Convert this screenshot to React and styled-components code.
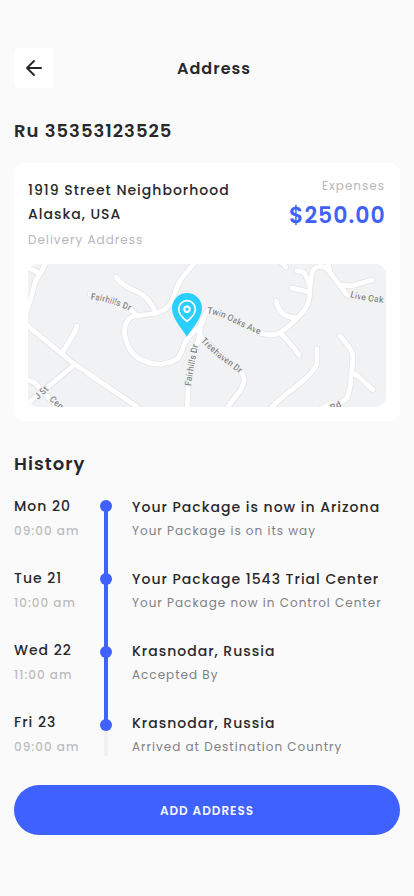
import React from 'react';
import styled, { createGlobalStyle } from 'styled-components';

const GlobalStyle = createGlobalStyle`
  * { box-sizing: border-box; }
  body {
    margin: 0;
    background: #fafafa;
    color: #29292b;
    font-family: Poppins, Inter, sans-serif;
    letter-spacing: 1px;
  }
`;

const Screen = styled.main`
  min-height: 896px;
  padding: 48px 14px 0;
  background: #fafafa;
  white-space: nowrap;
`;

const Header = styled.header`
  display: flex;
  height: 40px;
`;

const BackButton = styled.button`
  display: flex;
  align-items: center;
  justify-content: center;
  width: 40px;
  height: 40px;
  padding: 0;
  border: 0;
  border-radius: 5px;
  background: #fff;
  color: #262628;
`;

const PageTitle = styled.h1`
  flex: 1;
  margin: 0;
  padding: 1px 26px 0 0;
  text-align: center;
  font-size: 16px;
  font-weight: 600;
  line-height: 40px;
`;

const SectionTitle = styled.h2`
  margin: 31px 0 20px;
  font-size: 18px;
  font-weight: 600;
  line-height: 24px;
`;

const Card = styled.section`
  padding: 13px 14px 14px;
  border-radius: 10px;
  background: #fff;
`;

const CardTop = styled.div`
  display: flex;
  justify-content: space-between;
  margin-bottom: 14px;
`;

const AddressBlock = styled.div`
  padding-top: 2px;
`;

const AddressLine = styled.div`
  font-size: 14px;
  font-weight: 500;
  line-height: 24px;
`;

const Caption = styled.div`
  margin-top: ${(p) => p.$gap || 0}px;
  color: ${(p) => p.$color || '#b7b7bb'};
  font-size: 12px;
  font-weight: ${(p) => p.$weight || 400};
  line-height: 20px;
`;

const CostBlock = styled.div`
  display: flex;
  flex-direction: column;
  align-items: flex-end;
  padding-right: 1px;
`;

const Price = styled.div`
  margin-top: 6px;
  margin-right: -0.6px;
  color: #3f61f6;
  font-size: 22px;
  font-weight: 600;
  line-height: 28px;
`;

const MapFrame = styled.div`
  height: 143px;
  overflow: hidden;
  border-radius: 10px;
  background: #f1f2f4;

  svg { display: block; }
`;

const Timeline = styled.section`
  display: grid;
  grid-template-columns: 86px 12px 1fr;
  height: 261px;
`;

const Entries = styled.div`
  padding: ${(p) => p.$pad};
`;

const Entry = styled.div`
  height: 72px;
`;

const EntryTitle = styled.div`
  font-size: 14px;
  font-weight: 500;
  line-height: 20px;
`;

const Track = styled.div`
  display: flex;
  flex-direction: column;
  gap: 61px;
  height: 256px;
  margin-top: 4px;
  background:
    linear-gradient(#3e61ff, #3e61ff) center 6px / 4px 219px no-repeat,
    linear-gradient(#f1f1f2, #f1f1f2) center 6px / 4px 250px no-repeat;
`;

const Dot = styled.span`
  width: 12px;
  height: 12px;
  border-radius: 50%;
  background: #3e61ff;
`;

const PrimaryButton = styled.button`
  display: block;
  width: 100%;
  height: 50px;
  margin-top: 28px;
  padding: 1px 0 0;
  border: 0;
  border-radius: 25px;
  background: #3e61ff;
  color: #f4f6ff;
  font: 600 12px/49px Poppins, Inter, sans-serif;
  letter-spacing: 1px;
`;

const ROADS = [
  'M18 -2 C14 8 9 13 7 19 S4 32 -1 46',
  'M-2 2 L12 10',
  'M-2 60.5 L45 99 L112 145',
  'M49 62 Q47 69 42 76 L34 89',
  'M46 101 L15 127 L-2 141',
  'M-2 115 Q5 117 9 121 L31 145',
  'M88 13 Q93 20 103 25 Q116 30 121 37 Q125 43 128 49',
  'M62 30 L66 32',
  'M102 45 L109 52',
  'M167 -2 Q158 9 152 17 C147 26 146 36 141 41 Q136 47 129 49 Q117 51 106 52 C99 54 95 62 97 72 C99 82 104 90 110 94 C118 98 127 101 134 100 Q145 98 149 95 C155 89 154 83 158 77 C164 66 173 65 175 57 C176 52 177 49 181 46',
  'M174 56 L172 65 Q172 74 169 80 L163 110 Q159 120 160 132 L159 145',
  'M171 65 Q172 73 178 78 L211 106 Q217 111 216 118 Q213 127 207 133 L198 146',
  'M181 46 Q187 48 191 50',
  'M231 69 Q235 70 242 71 Q250 71 257 65 Q263 61 268 55 Q278 46 280 39 C283 31 281 23 283 15 Q284 4 289 3 C296 1 299 4 304 11 Q311 20 316 27 Q318 31 324 33',
  'M315 21 Q323 23 330 20 L344 16',
  'M269 7 Q277 7 278 12 L281 20',
  'M264 24 L281 28',
  'M248 37 Q251 48 257 51 Q262 54 269 54',
  'M252 69 Q262 78 271 91',
  'M289 85 L289 99 Q287 106 279 113 C268 124 256 130 242 145',
  'M312 72 Q320 81 324 88 Q326 96 323 110 Q323 124 319 134 Q315 139 309 139 Q299 140 293 145',
  'M324 109 L330 112 L345 126',
  'M253 -2 L258 3',
  'M299 -3 L302 6',
];

const LABELS = [
  { id: 'fairhills', d: 'M62.5 35.5 Q85 38 107 49.5', text: 'Fairhills Dr', length: 41 },
  { id: 'twin-oaks', d: 'M179 49 Q191 51 206 59 Q222 67 242 75', text: 'Twin Oaks Ave', length: 57 },
  { id: 'treehaven', d: 'M172.5 77 Q183 88 192 95 Q203 103 217 114', text: 'Treehaven Dr', length: 51 },
  { id: 'fairhills-south', d: 'M163 122 Q165 106 171 77', text: 'Fairhills Dr', length: 42 },
  { id: 'live-oak', d: 'M322 33 Q337 38 370 40', text: 'Live Oak', length: 34 },
  { id: 'j-st', d: 'M10 136 L27 120', text: 'J St', length: 15 },
  { id: 'center', d: 'M21 136 L48 160', text: 'Cen', length: 15 },
  { id: 'rd', d: 'M304 147 L322 138', text: 'Rd', length: 11 },
];

const HISTORY = [
  { day: 'Mon 20', time: '09:00 am', title: 'Your Package is now in Arizona', note: 'Your Package is on its way' },
  { day: 'Tue 21', time: '10:00 am', title: 'Your Package 1543 Trial Center', note: 'Your Package now in Control Center' },
  { day: 'Wed 22', time: '11:00 am', title: 'Krasnodar, Russia', note: 'Accepted By' },
  { day: 'Fri 23', time: '09:00 am', title: 'Krasnodar, Russia', note: 'Arrived at Destination Country' },
];

function BackArrow() {
  return (
    <svg width="18" height="18" viewBox="0 0 18 18" fill="none" stroke="currentColor" strokeWidth="1.9" strokeLinecap="round" strokeLinejoin="round">
      <path d="M16 9H2M9 2L2 9l7 7" />
    </svg>
  );
}

function StreetMap() {
  return (
    <svg width="358" height="143" viewBox="0 0 358 143" fill="none">
      <g stroke="#e1e2e4" strokeWidth="6.2" strokeLinecap="round" strokeLinejoin="round">
        {ROADS.map((d) => <path key={d} d={d} />)}
      </g>
      <g stroke="#fff" strokeWidth="4.8" strokeLinecap="round" strokeLinejoin="round">
        {ROADS.map((d) => <path key={d} d={d} />)}
      </g>
      <g
        fill="#858688"
        stroke="#f3f4f5"
        strokeWidth="2.6"
        paintOrder="stroke"
        fontFamily="Roboto, sans-serif"
        fontSize="9"
        fontWeight="500"
        letterSpacing="0"
      >
        {LABELS.map(({ id, d, text, length }) => (
          <React.Fragment key={id}>
            <path id={id} d={d} fill="none" stroke="none" />
            <text textLength={length} lengthAdjust="spacingAndGlyphs">
              <textPath href={`#${id}`} textLength={length} lengthAdjust="spacingAndGlyphs">{text}</textPath>
            </text>
          </React.Fragment>
        ))}
      </g>
      <path fill="#2acfff" d="M159 73 C156 67 144 55 144 44 A15 15 0 0 1 174 44 C174 55 162 67 159 73Z" />
      <g stroke="#fff" strokeWidth="1.7">
        <path d="M159 57.3 C155 54.3 150.7 50.2 150.7 45 A8.3 8.3 0 0 1 167.3 45 C167.3 50.2 163 54.3 159 57.3Z" strokeLinejoin="round" />
        <circle cx="159" cy="45.2" r="2.7" strokeWidth="2" />
      </g>
    </svg>
  );
}

export default function App() {
  return (
    <Screen>
      <GlobalStyle />
      <Header>
        <BackButton aria-label="Back"><BackArrow /></BackButton>
        <PageTitle>Address</PageTitle>
      </Header>

      <SectionTitle>Ru 35353123525</SectionTitle>

      <Card>
        <CardTop>
          <AddressBlock>
            <AddressLine>1919 Street Neighborhood</AddressLine>
            <AddressLine>Alaska, USA</AddressLine>
            <Caption $gap={4}>Delivery Address</Caption>
          </AddressBlock>
          <CostBlock>
            <Caption>Expenses</Caption>
            <Price>$250.00</Price>
          </CostBlock>
        </CardTop>
        <MapFrame><StreetMap /></MapFrame>
      </Card>

      <SectionTitle>History</SectionTitle>

      <Timeline>
        <Entries $pad="0">
          {HISTORY.map(({ day, time }) => (
            <Entry key={day}>
              <EntryTitle>{day}</EntryTitle>
              <Caption $gap={5} $weight={500} $color="#bdbdc0">{time}</Caption>
            </Entry>
          ))}
        </Entries>
        <Track>
          {HISTORY.map(({ day }) => <Dot key={day} />)}
        </Track>
        <Entries $pad="1px 0 0 20px">
          {HISTORY.map(({ day, title, note }) => (
            <Entry key={day}>
              <EntryTitle>{title}</EntryTitle>
              <Caption $gap={4} $color="#7f8086">{note}</Caption>
            </Entry>
          ))}
        </Entries>
      </Timeline>

      <PrimaryButton>ADD ADDRESS</PrimaryButton>
    </Screen>
  );
}
